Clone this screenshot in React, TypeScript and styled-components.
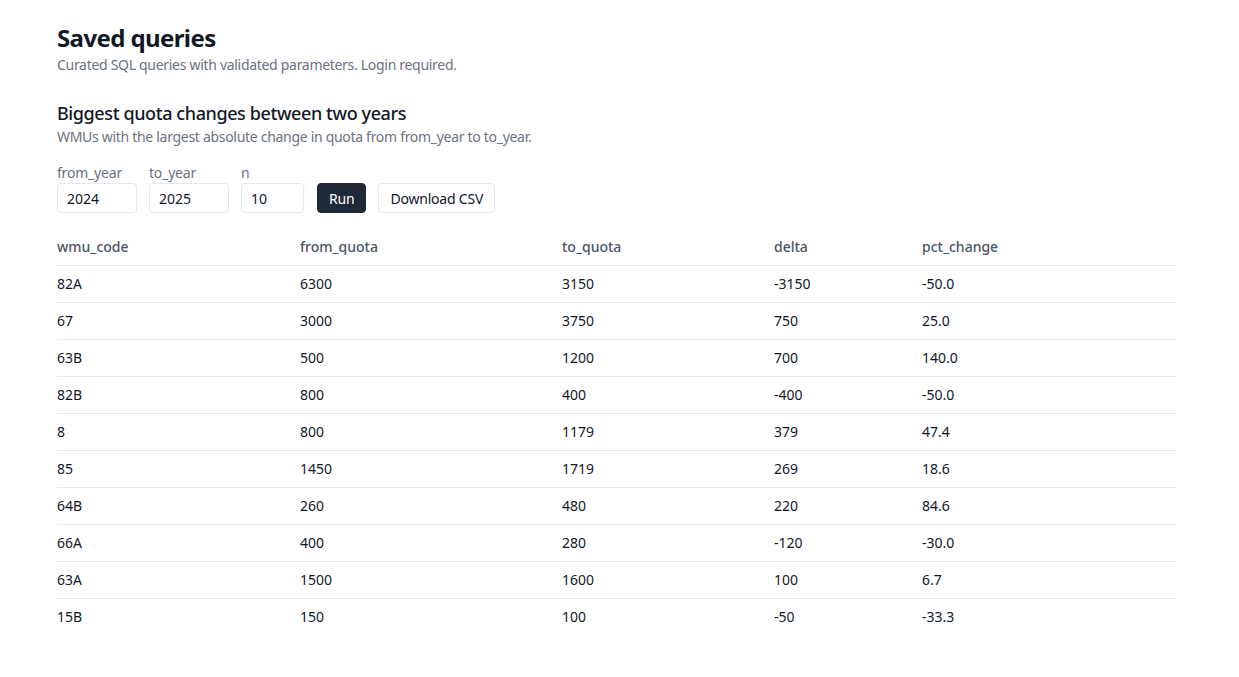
import styled, { createGlobalStyle } from "styled-components";

const GlobalStyle = createGlobalStyle`
  * { box-sizing: border-box; }
  body {
    margin: 0;
    background: #ffffff;
    font-family: "Noto Sans", "DejaVu Sans", sans-serif;
    color: #111827;
  }
`;

const Page = styled.div`
  padding: 22px 62px 40px 57px;
  max-width: 1239px;
`;

const Title = styled.h1`
  margin: 0;
  font-size: 24px;
  line-height: 32px;
  font-weight: 700;
  letter-spacing: -0.6px;
  color: #111827;
`;

const Muted = styled.p<{ $top?: number }>`
  margin: ${(p) => p.$top ?? 0}px 0 0;
  font-size: 14px;
  line-height: 20px;
  letter-spacing: -0.3px;
  color: #6b7280;
`;

const Section = styled.section`
  margin-top: 24px;
`;

const SectionTitle = styled.h2`
  margin: 0;
  font-size: 18px;
  line-height: 28px;
  font-weight: 500;
  letter-spacing: -0.4px;
  color: #111827;
`;

const Controls = styled.div`
  display: flex;
  align-items: flex-end;
  gap: 12px;
  margin-top: 16px;
`;

const Field = styled.label`
  display: flex;
  flex-direction: column;
  font-size: 14px;
  line-height: 20px;
  letter-spacing: -0.2px;
  color: #6b7280;
`;

const Input = styled.input<{ $w: number }>`
  width: ${(p) => p.$w}px;
  height: 30px;
  padding: 0 9px;
  border: 1px solid #e5e7eb;
  border-radius: 4px;
  font: inherit;
  font-size: 14px;
  color: #111827;
  outline: none;
`;

const Button = styled.button<{ $primary?: boolean }>`
  height: 30px;
  padding: 0 11px;
  border-radius: 4px;
  font-family: inherit;
  font-size: 14px;
  letter-spacing: -0.2px;
  cursor: pointer;
  border: 1px solid ${(p) => (p.$primary ? "#1f2937" : "#e5e7eb")};
  background: ${(p) => (p.$primary ? "#1f2937" : "#ffffff")};
  color: ${(p) => (p.$primary ? "#ffffff" : "#111827")};
  margin-left: ${(p) => (p.$primary ? 1 : 0)}px;
`;

const Table = styled.table`
  margin-top: 15px;
  width: 1120px;
  border-collapse: collapse;
  table-layout: fixed;
  font-size: 14px;
`;

const Th = styled.th`
  height: 37px;
  padding: 0;
  text-align: left;
  font-weight: 500;
  color: #4b5563;
  border-bottom: 1px solid #e5e7eb;
`;

const Tr = styled.tr`
  &:not(:last-child) td {
    border-bottom: 1px solid #e5e7eb;
  }
`;

const Td = styled.td`
  height: 37px;
  padding: 0;
  color: #111827;
`;

const columns = [
  { key: "wmu_code", width: 243 },
  { key: "from_quota", width: 262 },
  { key: "to_quota", width: 212 },
  { key: "delta", width: 148 },
  { key: "pct_change", width: 255 },
];

const rows = [
  ["82A", "6300", "3150", "-3150", "-50.0"],
  ["67", "3000", "3750", "750", "25.0"],
  ["63B", "500", "1200", "700", "140.0"],
  ["82B", "800", "400", "-400", "-50.0"],
  ["8", "800", "1179", "379", "47.4"],
  ["85", "1450", "1719", "269", "18.6"],
  ["64B", "260", "480", "220", "84.6"],
  ["66A", "400", "280", "-120", "-30.0"],
  ["63A", "1500", "1600", "100", "6.7"],
  ["15B", "150", "100", "-50", "-33.3"],
];

export default function App() {
  return (
    <Page>
      <GlobalStyle />
      <Title>Saved queries</Title>
      <Muted $top={1}>Curated SQL queries with validated parameters. Login required.</Muted>

      <Section>
        <SectionTitle>Biggest quota changes between two years</SectionTitle>
        <Muted>WMUs with the largest absolute change in quota from from_year to to_year.</Muted>

        <Controls>
          <Field>
            from_year
            <Input $w={80} defaultValue="2024" />
          </Field>
          <Field>
            to_year
            <Input $w={80} defaultValue="2025" />
          </Field>
          <Field>
            n
            <Input $w={63} defaultValue="10" />
          </Field>
          <Button $primary>Run</Button>
          <Button>Download CSV</Button>
        </Controls>

        <Table>
          <colgroup>
            {columns.map((c) => (
              <col key={c.key} style={{ width: c.width }} />
            ))}
          </colgroup>
          <thead>
            <tr>
              {columns.map((c) => (
                <Th key={c.key}>{c.key}</Th>
              ))}
            </tr>
          </thead>
          <tbody>
            {rows.map((r) => (
              <Tr key={r[0]}>
                {r.map((v, i) => (
                  <Td key={i}>{v}</Td>
                ))}
              </Tr>
            ))}
          </tbody>
        </Table>
      </Section>
    </Page>
  );
}
